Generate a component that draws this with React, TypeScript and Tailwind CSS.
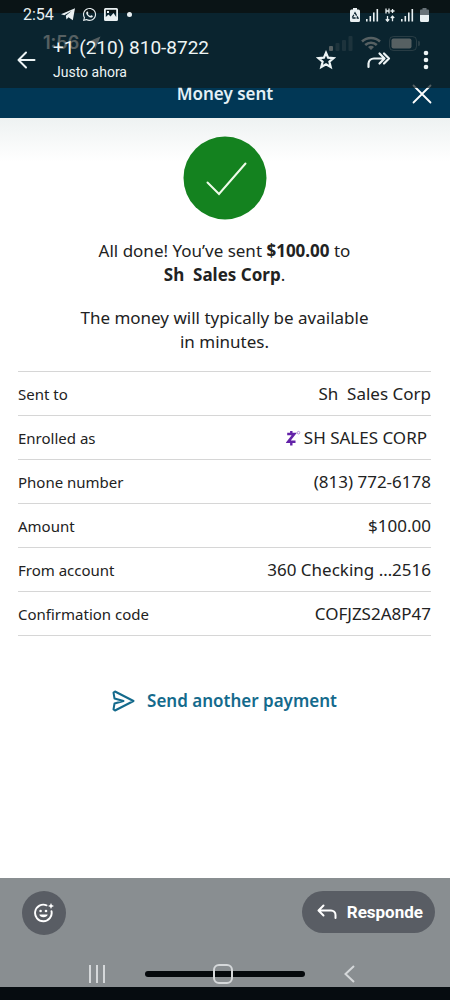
import React from 'react';
import { FaWhatsapp } from 'react-icons/fa';

interface Detail {
  label: string;
  value: string;
  zelle?: boolean;
}

const details: Detail[] = [
  { label: 'Sent to', value: 'Sh\u00a0 Sales Corp' },
  { label: 'Enrolled as', value: 'SH SALES CORP', zelle: true },
  { label: 'Phone number', value: '(813) 772-6178' },
  { label: 'Amount', value: '$100.00' },
  { label: 'From account', value: '360 Checking …2516' },
  { label: 'Confirmation code', value: 'COFJZS2A8P47' }
];

function SignalIcon() {
  return (
    <svg width="13" height="14" viewBox="0 0 13 14" fill="currentColor">
      <rect x="0" y="11" width="1.6" height="2.5" />
      <rect x="3.5" y="8" width="1.6" height="5.5" />
      <rect x="7" y="4.5" width="1.6" height="9" />
      <rect x="10.5" y="1" width="1.6" height="12.5" />
    </svg>
  );
}

function StatusBar() {
  return (
    <div className="flex h-[29px] items-center justify-between pl-[23px] pr-[21px] text-[#e9f0f2]">
      <div className="flex items-center gap-[7px]">
        <span className="text-base leading-5">2:54</span>
        <svg width="14" height="13" viewBox="0 0 14 13" fill="currentColor">
          <path d="M14 .3 11.800 12.300 7.500 9.300 5.500 11.500 4.800 7.800 10.500 3 3.300 7.300 0 6.200Z" />
        </svg>
        <FaWhatsapp size={15} />
        <svg width="14" height="13" viewBox="0 0 14 13">
          <path fill="currentColor" fillRule="evenodd" d="M1.500 0h11A1.500 1.500 0 0 1 14 1.500v10a1.500 1.500 0 0 1-1.500 1.500h-11A1.500 1.500 0 0 1 0 11.500v-10A1.500 1.500 0 0 1 1.500 0ZM1.800 1.800v7.200L4.500 6.500l2 2 3-3.500 2.700 4V1.800ZM3 3h2v2H3Z" />
        </svg>
        <span className="ml-0.5 size-[5px] rounded-full bg-[#e9f0f2]" />
      </div>
      <div className="flex items-center gap-1.5">
        <svg width="10" height="14" viewBox="0 0 10 14">
          <path fill="currentColor" d="M3 0h4v1.500h1.500A1.500 1.500 0 0 1 10 3v9.500A1.500 1.500 0 0 1 8.500 14h-7A1.500 1.500 0 0 1 0 12.500V3a1.500 1.500 0 0 1 1.500-1.500H3Z" />
          <path fill="none" stroke="#0b2431" strokeWidth="1.300" strokeDasharray="3.200 1" d="M5 4.800 8 10H2Z" />
        </svg>
        <SignalIcon />
        <svg width="10" height="14" viewBox="0 0 10 14" fill="none" stroke="currentColor" strokeWidth="1.300">
          <path d="M1 0.500v5M4 0.500v5M1 3h3M5.500 3h4M7.500 1v4M2.500 8v5M.8 11.300l1.700 1.900 1.700-1.900M7.500 13.200V8M5.800 10l1.700-1.900L9.200 10" />
        </svg>
        <SignalIcon />
        <svg width="9" height="14" viewBox="0 0 9 14">
          <path fill="#687278" d="M2.500 0h4v1.500H8a1 1 0 0 1 1 1V8H0V2.500a1 1 0 0 1 1-1h1.500Z" />
          <path fill="currentColor" d="M0 7h9v5.500A1.500 1.500 0 0 1 7.500 14h-6A1.500 1.500 0 0 1 0 12.500Z" />
        </svg>
      </div>
    </div>
  );
}

function ViewerBar() {
  return (
    <div className="absolute inset-x-0 top-0 h-[88px] bg-[rgba(14,28,32,0.7)] font-[Roboto,sans-serif]">
      <StatusBar />
      <div className="flex items-center pl-[17px] pr-[21px] pt-[7px] text-[#edf4f5]">
        <button type="button" aria-label="Back" className="mr-[17px]">
          <svg width="19" height="18" viewBox="0 0 19 18" fill="none" stroke="currentColor" strokeWidth="2" strokeLinecap="round" strokeLinejoin="round">
            <path d="M9 1.500 1.500 9 9 16.500M2 9h15.500" />
          </svg>
        </button>
        <div className="flex-1">
          <p className="text-[19px] leading-6">+1 (210) 810-8722</p>
          <p className="text-sm leading-6">Justo ahora</p>
        </div>
        <button type="button" aria-label="Star" className="mr-[31px]">
          <svg width="20" height="20" viewBox="0 0 20 20" fill="none" stroke="currentColor" strokeWidth="2.200" strokeLinejoin="miter">
            <path d="m10 2.800 2.100 4.900 5.400.5-4.100 3.500 1.300 5.300L10 14.200l-4.700 2.800 1.300-5.300-4.100-3.500 5.400-.5Z" />
          </svg>
        </button>
        <button type="button" aria-label="Forward" className="mr-8">
          <svg width="24" height="18" viewBox="0 0 24 18" fill="none" stroke="currentColor" strokeWidth="2.200" strokeLinecap="round" strokeLinejoin="round">
            <path d="M1.500 16v-3.500A5.500 5.500 0 0 1 7 7.500H17M12.500 2.500l5 5-5 5M17 2.500l5 5-5 5" />
          </svg>
        </button>
        <button type="button" aria-label="More options">
          <svg width="6" height="20" viewBox="0 0 6 20" fill="currentColor">
            <circle cx="3" cy="3" r="2.300" />
            <circle cx="3" cy="10" r="2.300" />
            <circle cx="3" cy="17" r="2.300" />
          </svg>
        </button>
      </div>
    </div>
  );
}

function PaymentHeader() {
  return (
    <div className="border-t-[13px] border-black bg-[#013755] text-white">
      <div className="flex h-15 items-center justify-between pl-[43px] pr-[30px]">
        <div className="flex items-center gap-2 font-[Inter,sans-serif]">
          <span className="text-lg font-semibold leading-6">1:56</span>
          <svg width="14" height="14" viewBox="0 0 14 14" fill="currentColor">
            <path d="M13.500.5 8 13.500 7 7 .5 6Z" />
          </svg>
        </div>
        <div className="flex items-center gap-2">
          <svg width="24" height="15" viewBox="0 0 24 15" fill="currentColor">
            <rect x="0" y="10" width="4" height="5" rx="1" />
            <g opacity="0.250">
              <rect x="6.500" y="7" width="4" height="8" rx="1" />
              <rect x="13" y="4" width="4" height="11" rx="1" />
              <rect x="19.500" y="0" width="4" height="15" rx="1" />
            </g>
          </svg>
          <svg width="20" height="15" viewBox="0 0 20 15" fill="none" stroke="currentColor" strokeWidth="2.500">
            <path d="M1 5.500a13 13 0 0 1 18 0M4.200 9a8.500 8.500 0 0 1 11.600 0" />
            <path d="m10 14-3-3a4.500 4.500 0 0 1 6 0Z" fill="currentColor" stroke="none" />
          </svg>
          <svg width="31" height="15" viewBox="0 0 31 15" fill="currentColor">
            <rect x=".5" y=".5" width="27" height="14" rx="4" fill="none" stroke="currentColor" opacity="0.400" />
            <rect x="2.500" y="2.500" width="20" height="10" rx="2" />
            <path d="M29 5a2.500 2.500 0 0 1 0 5Z" opacity="0.400" />
          </svg>
        </div>
      </div>
      <div className="grid h-[45px] grid-cols-[1fr_auto_1fr] items-center px-[18px] pb-1">
        <h1 className="col-start-2 text-[17px] font-semibold leading-6 text-[#e4f0f6]">Money sent</h1>
        <button type="button" aria-label="Close" className="justify-self-end">
          <svg width="20" height="20" viewBox="0 0 20 20" fill="none" stroke="currentColor" strokeWidth="1.800" strokeLinecap="round">
            <path d="m1.500 1.500 17 17M18.500 1.500l-17 17" />
          </svg>
        </button>
      </div>
    </div>
  );
}

function ZelleIcon() {
  return (
    <svg width="16" height="16" viewBox="0 0 16 16" fill="none" stroke="#6322a8">
      <path strokeWidth="2.600" d="M1.200 4h7L2.200 11.800h7.300" />
      <path strokeWidth="2.400" d="M5.300 1v3M5.300 12v3.500" />
      <circle cx="12.500" cy="2.700" r="1.300" strokeWidth="1" opacity="0.450" />
    </svg>
  );
}

function Receipt() {
  return (
    <main className="flex flex-1 flex-col bg-linear-to-b from-[#eef2f2] to-white to-[44px] pl-[18px] pr-[19px] pt-[18px] text-[#222]">
      <svg className="mx-auto" width="84" height="84" viewBox="0 0 84 84" role="img" aria-label="Success">
        <circle cx="42" cy="42" r="41.500" fill="#14821f" />
        <path d="m24.500 46.500 11.500 11.500 26.500-30.500" fill="none" stroke="#eefbe9" strokeWidth="2" strokeLinecap="round" />
      </svg>
      <p className="mt-[19px] text-center text-[17px] leading-6">
        All done! You’ve sent <strong className="font-bold">$100.00</strong> to
        <br />
        <strong className="font-bold">Sh&nbsp; Sales Corp</strong>.
      </p>
      <p className="mt-[19px] text-center text-[17px] leading-6">
        The money will typically be available
        <br />
        in minutes.
      </p>
      <table className="mt-[17px] w-full border-collapse">
        <tbody>
          {details.map((row) => (
            <tr key={row.label} className="h-11 border-y border-[#d6d6d6]">
              <th scope="row" className="text-left text-[15px] font-normal leading-6">{row.label}</th>
              <td className="text-right text-[17px] leading-6">
                {row.zelle ? (
                  <span className="flex items-center justify-end gap-0.5 pr-1">
                    <ZelleIcon />
                    {row.value}
                  </span>
                ) : (
                  row.value
                )}
              </td>
            </tr>
          ))}
        </tbody>
      </table>
      <button type="button" className="mx-auto mt-[53px] flex items-center gap-3 text-[17px] font-semibold leading-6 text-[#146a8c]">
        <svg width="23" height="22" viewBox="0 0 23 22" fill="none" stroke="currentColor" strokeWidth="2" strokeLinecap="round" strokeLinejoin="round">
          <path d="M3 1.500 21.500 11 3 20.500 1.500 19.500 2.500 13.500 11.500 11 2.500 8.500 1.500 2.500Z" />
        </svg>
        Send another payment
      </button>
    </main>
  );
}

function ReplyBar() {
  return (
    <footer className="border-b-[13px] border-[#060c10] bg-[#898e91] font-[Roboto,sans-serif] text-white">
      <div className="flex items-start justify-between pl-[22px] pr-[15px] pt-[13px]">
        <button type="button" aria-label="React" className="flex size-11 items-center justify-center rounded-full bg-[#595d64]">
          <svg width="20" height="20" viewBox="0 0 20 20" fill="none" stroke="currentColor" strokeWidth="1.900" strokeLinecap="round">
            <path d="M12.500 2.300a8.300 8.300 0 1 0 5 6" />
            <path fill="currentColor" stroke="none" d="M5.300 11.500h8.400a4.300 3.500 0 0 1-8.400 0ZM17 0l.9 2.100L20 3l-2.100.9L17 6l-.9-2.100L14 3l2.100-.9Z" />
            <circle cx="6.600" cy="8" r="1.300" fill="currentColor" stroke="none" />
            <circle cx="12" cy="8" r="1.300" fill="currentColor" stroke="none" />
          </svg>
        </button>
        <button type="button" className="flex h-[42px] items-center gap-2.5 rounded-full bg-[#595d64] pl-[15px] pr-3 text-[17px] font-bold leading-6">
          <svg width="20" height="16" viewBox="0 0 20 16" fill="none" stroke="currentColor" strokeWidth="2" strokeLinecap="round" strokeLinejoin="round">
            <path d="M6.500 1.500 1.500 6.500l5 5M2 6.500h12a4.500 4.500 0 0 1 4.500 4.500v3" />
          </svg>
          Responde
        </button>
      </div>
      <div className="relative mt-[26px] grid h-[26px] grid-cols-3 items-center justify-items-center pl-[34px] pr-[38px] text-[#d5d8da]">
        <span className="absolute inset-x-0 top-1/2 mx-auto h-1.5 w-40 -translate-y-1/2 rounded-full bg-[#05090c]" />
        <button type="button" aria-label="Recent apps">
          <svg width="18" height="18" viewBox="0 0 18 18" stroke="currentColor" strokeWidth="2">
            <path d="M2 0v18M9 0v18M16 0v18" />
          </svg>
        </button>
        <button type="button" aria-label="Home" className="relative">
          <svg width="20" height="20" viewBox="0 0 20 20" fill="none" stroke="currentColor" strokeWidth="2">
            <rect x="1" y="1" width="18" height="18" rx="5" />
          </svg>
        </button>
        <button type="button" aria-label="Go back">
          <svg width="11" height="18" viewBox="0 0 11 18" fill="none" stroke="currentColor" strokeWidth="2">
            <path d="M10 1 1.500 9l8.500 8" />
          </svg>
        </button>
      </div>
    </footer>
  );
}

export default function App() {
  return (
    <div className="relative flex min-h-screen flex-col bg-white font-['Noto_Sans',sans-serif]">
      <PaymentHeader />
      <Receipt />
      <ReplyBar />
      <ViewerBar />
    </div>
  );
}
